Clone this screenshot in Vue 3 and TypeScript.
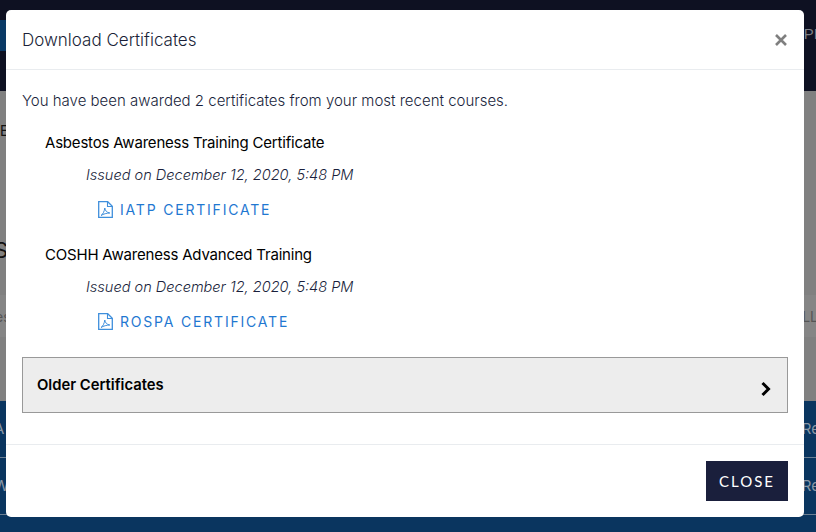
<template>
  <div class="page">
    <!-- page behind the dimmed backdrop -->
    <div class="bg-nav">
      <span class="bg-logo"></span>
      <span class="bg-nav-text">PI</span>
    </div>
    <div class="bg-main">
      <span class="bg-e">E</span>
      <span class="bg-s">S</span>
      <div class="bg-band">
        <span>es</span>
        <span>LL</span>
      </div>
    </div>
    <div class="bg-table">
      <div class="bg-row"><span>A</span><span>Re</span></div>
      <div class="bg-row"><span>W</span><span>Re</span></div>
    </div>

    <div class="backdrop">
      <div class="modal">
        <header class="modal-head">
          <h5>Download Certificates</h5>
          <button class="x-btn" aria-label="Close">
            <svg width="14" height="14" viewBox="0 0 14 14">
              <path d="M2 2 12 12M12 2 2 12" stroke="#7f7f7f" stroke-width="2.6" fill="none" />
            </svg>
          </button>
        </header>
        <div class="modal-body">
          <p class="intro">You have been awarded {{ certificates.length }} certificates from your most recent courses.</p>
          <div v-for="cert in certificates" :key="cert.title" class="cert">
            <h6>{{ cert.title }}</h6>
            <p class="issued">Issued on {{ cert.issued }}</p>
            <a class="cert-link" href="#">
              <svg class="pdf" width="15" height="17" viewBox="0 0 15 17" fill="none" stroke="#3f8fdc">
                <path d="M.7.7h9l4.600 4.600v11H.7z" stroke-width="1.300" />
                <path d="M9.500.7v4.800h4.800" stroke-width="1.100" />
                <path d="M3 14.500c2-1.300 3.300-4 3.800-7.500.4 2.700 1.900 4.500 5 5-3 .1-6.300.9-8.800 2.500z" stroke-width="1" />
              </svg>
              <span>{{ cert.link }}</span>
            </a>
          </div>
          <div class="older">
            <strong>Older Certificates</strong>
            <svg class="chevron" width="12" height="16" viewBox="0 0 12 16">
              <path d="M2.500 2 8.500 8l-6 6" stroke="#000" stroke-width="3" fill="none" />
            </svg>
          </div>
        </div>
        <footer class="modal-foot">
          <button class="close-btn">CLOSE</button>
        </footer>
      </div>
    </div>
  </div>
</template>

<script setup lang="ts">
type Certificate = {
  title: string
  issued: string
  link: string
}

const certificates: Certificate[] = [
  { title: 'Asbestos Awareness Training Certificate', issued: 'December 12, 2020, 5:48 PM', link: 'IATP CERTIFICATE' },
  { title: 'COSHH Awareness Advanced Training', issued: 'December 12, 2020, 5:48 PM', link: 'ROSPA CERTIFICATE' }
]
</script>

<style>
html,
body {
  margin: 0;
  overflow: hidden;
}
</style>

<style scoped>
.page {
  position: relative;
  width: 816px;
  height: 532px;
  display: flex;
  flex-direction: column;
  overflow: hidden;
  font-family: Inter, "Liberation Sans", sans-serif;
  background: #808080;
}

.bg-nav {
  height: 91px;
  background: #0e1122;
  display: flex;
  justify-content: space-between;
  padding-top: 20px;
  box-sizing: border-box;
}

.bg-logo {
  width: 6px;
  height: 31px;
  background: #0a3a66;
}

.bg-nav-text {
  font-size: 15px;
  color: #7d7f86;
  margin: 5px -2px 0 0;
  font-family: "Liberation Sans", sans-serif;
}

.bg-main {
  height: 310px;
  background: #808080;
  color: #111;
  font-size: 14px;
  display: flex;
  flex-direction: column;
}

.bg-e {
  margin-top: 30px;
  height: 20px;
  line-height: 20px;
}

.bg-s {
  margin-top: 96px;
  font-size: 22px;
  line-height: 26px;
  margin-left: -6px;
}

.bg-band {
  margin-top: 32px;
  height: 42px;
  background: #858585;
  display: flex;
  justify-content: space-between;
  align-items: center;
  color: #555;
}

.bg-band span:first-child {
  margin-left: -5px;
}

.bg-band span:last-child {
  margin-right: -2px;
}

.bg-table {
  flex: 1;
  background: #0a355f;
  color: #8a97a5;
  font-size: 15px;
}

.bg-row {
  height: 57px;
  line-height: 56px;
  border-bottom: 1px solid #6c7f93;
  display: flex;
  justify-content: space-between;
  box-sizing: border-box;
  overflow: hidden;
}

.bg-row span:first-child {
  margin-left: -6px;
}

.bg-row span:last-child {
  margin-right: -4px;
}

.backdrop {
  position: absolute;
  inset: 0;
}

.modal {
  margin: 10px 12px 0 6px;
  width: 798px;
  height: 507px;
  background: #fff;
  border-radius: 5px;
  display: flex;
  flex-direction: column;
}

.modal-head {
  height: 60px;
  box-sizing: border-box;
  flex: none;
  display: flex;
  align-items: center;
  justify-content: space-between;
  padding: 0 16px;
  border-bottom: 1px solid #e9ecef;
}

.modal-head h5 {
  margin: 0;
  font-size: 17px;
  font-weight: 300;
  color: #1a1f38;
}

.x-btn {
  border: 0;
  background: none;
  padding: 0;
  display: flex;
}

.modal-body {
  flex: 1;
  padding: 21px 16px 0;
  display: flex;
  flex-direction: column;
}

.intro {
  margin: 0 0 22px;
  font-size: 15px;
  line-height: 20px;
  color: #1a1f3c;
  font-weight: 300;
}

.cert {
  height: 112px;
  flex: none;
  padding-left: 23px;
  box-sizing: border-box;
}

.cert h6 {
  margin: 0;
  font-size: 15px;
  font-weight: 400;
  letter-spacing: -0.2px;
  line-height: 20px;
  color: #000;
}

.issued {
  margin: 12px 0 0 41px;
  font-size: 14.55px;
  line-height: 20px;
  font-style: italic;
  font-weight: 300;
  color: #1a1f3c;
}

.cert-link {
  margin: 14px 0 0 53px;
  display: flex;
  align-items: center;
  gap: 7px;
  height: 20px;
  color: #1f78d1;
  text-decoration: none;
  font-size: 14px;
  letter-spacing: 1.8px;
  font-weight: 400;
}

.older {
  height: 56px;
  flex: none;
  box-sizing: border-box;
  border: 1px solid #999;
  background: #ededed;
  display: flex;
  align-items: center;
  justify-content: space-between;
  padding: 0 15px 0 14px;
  color: #000;
}

.older strong {
  font-size: 14.8px;
  font-weight: 600;
}

.chevron {
  margin-top: 8px;
}

.modal-foot {
  height: 73px;
  flex: none;
  border-top: 1px solid #e9ecef;
  box-sizing: border-box;
  display: flex;
  justify-content: flex-end;
  align-items: center;
  padding: 0 16px;
}

.close-btn {
  width: 82px;
  height: 40px;
  border: 0;
  background: #1a1f3c;
  color: #fff;
  font-family: Lato, sans-serif;
  font-size: 15px;
  letter-spacing: 2px;
}
</style>
